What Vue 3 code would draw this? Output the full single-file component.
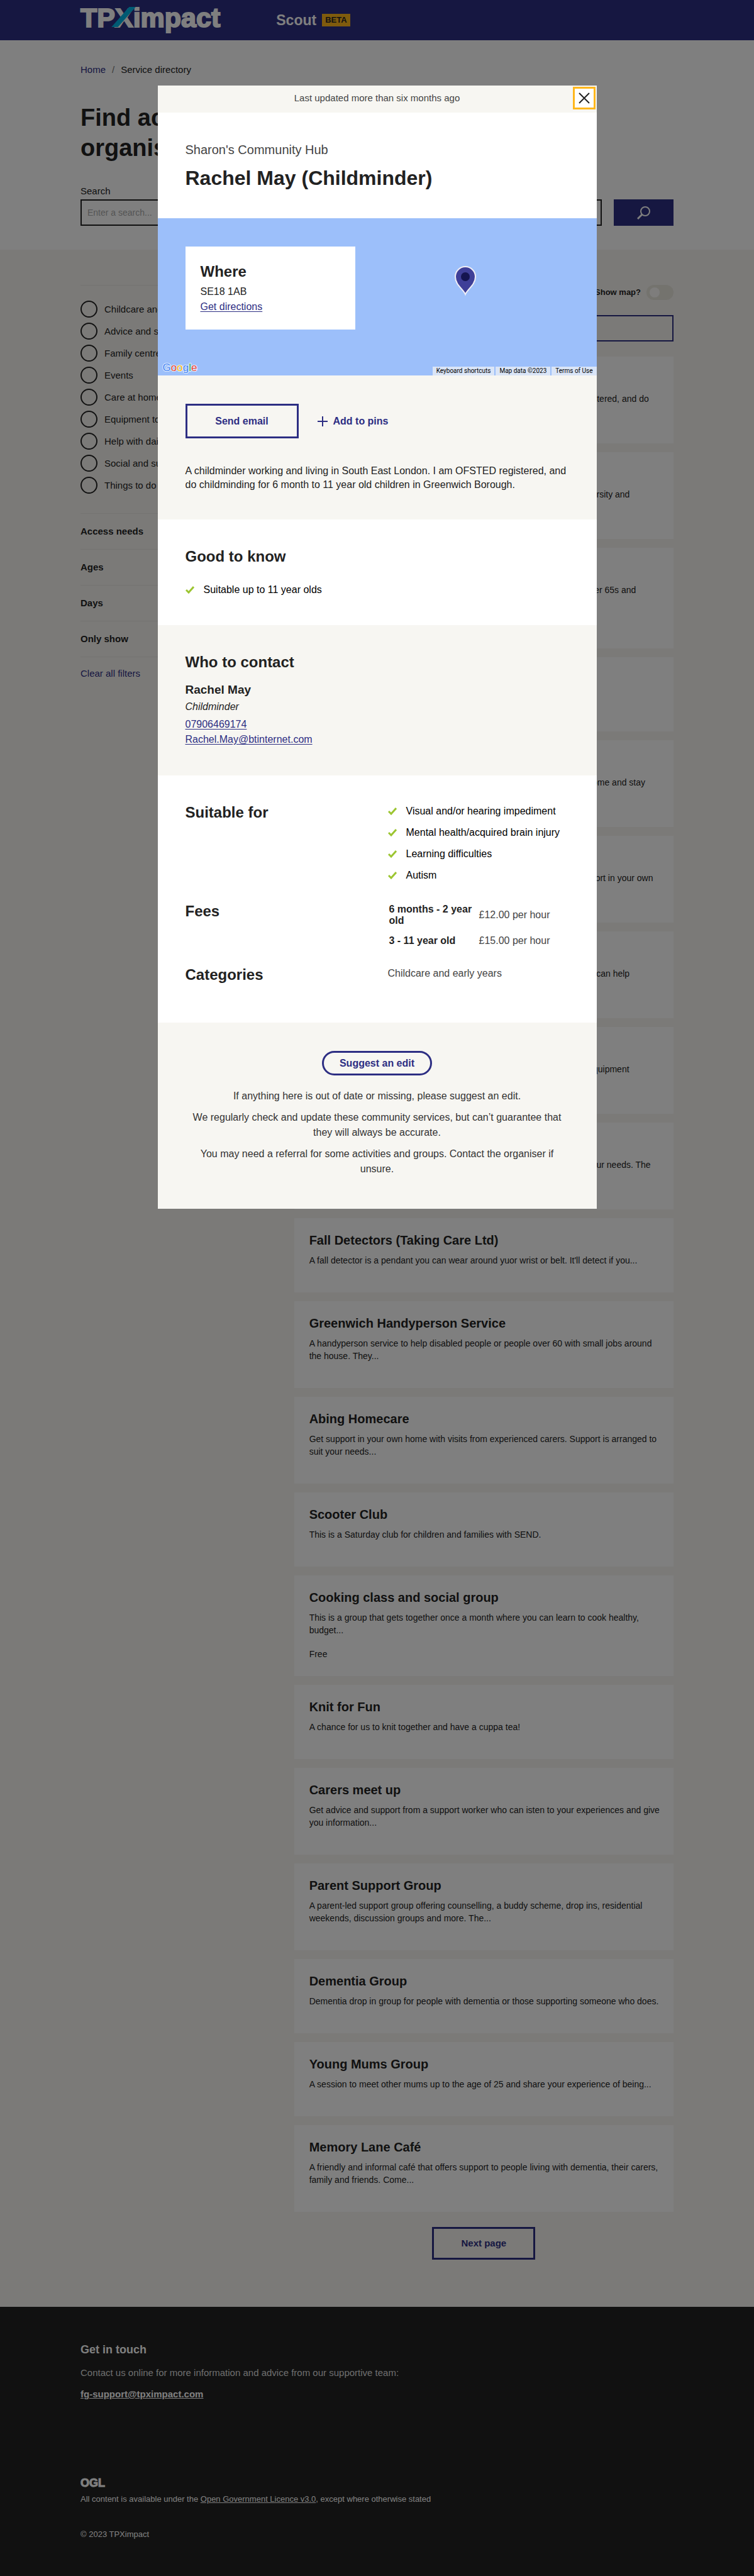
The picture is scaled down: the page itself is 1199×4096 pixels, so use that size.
<script setup>
import { ref } from 'vue'

const categories = [
  'Childcare and early years',
  'Advice and support',
  'Family centres',
  'Events',
  'Care at home',
  'Equipment to help you',
  'Help with daily living',
  'Social and support groups',
  'Things to do'
]

const filterGroups = ['Access needs', 'Ages', 'Days', 'Only show']

const services = [
  { name: 'Rachel May (Childminder)', text: 'Childminder working and living in South East London. I am OFSTED registered, and do\nchildminding for 6 month...' },
  { name: 'Community Choir', text: 'A friendly local group that sings songs together and celebrates all the diversity and\nculture of...' },
  { name: 'Lunch Club', text: 'A weekly lunch club offers good food and company for people who are over 65s and\ntheir carers...', fee: 'Free' },
  { name: 'Art Group', text: 'A relaxed art group for all abilities.' },
  { name: 'Home Support', text: 'We provide care and support so that people can live safely in their own home and stay\nindependent...' },
  { name: 'Care Companions', text: 'Our companions offer a helping hand, warm company and everyday comfort in your own\nhome...' },
  { name: 'Advice Line', text: 'Speak to someone about money, housing and benefits. Our friendly team can help\nyou find...' },
  { name: 'Mobility Hire', text: 'Hire or buy wheelchairs, walking frames, shower seats and other home equipment\nfrom our...' },
  { name: 'Meals at Home', text: 'Hot and frozen meals that are delivered to your home and made to suit your needs. The\nmeals...' },
  { name: 'Fall Detectors (Taking Care Ltd)', text: "A fall detector is a pendant you can wear around yuor wrist or belt. It'll detect if you..." },
  { name: 'Greenwich Handyperson Service', text: 'A handyperson service to help disabled people or people over 60 with small jobs around\nthe house. They...' },
  { name: 'Abing Homecare', text: 'Get support in your own home with visits from experienced carers. Support is arranged to\nsuit your needs...' },
  { name: 'Scooter Club', text: 'This is a Saturday club for children and families with SEND.' },
  { name: 'Cooking class and social group', text: 'This is a group that gets together once a month where you can learn to cook healthy,\nbudget...', fee: 'Free' },
  { name: 'Knit for Fun', text: 'A chance for us to knit together and have a cuppa tea!' },
  { name: 'Carers meet up', text: 'Get advice and support from a support worker who can isten to your experiences and give\nyou information...' },
  { name: 'Parent Support Group', text: 'A parent-led support group offering counselling, a buddy scheme, drop ins, residential\nweekends, discussion groups and more. The...' },
  { name: 'Dementia Group', text: 'Dementia drop in group for people with dementia or those supporting someone who does.' },
  { name: 'Young Mums Group', text: 'A session to meet other mums up to the age of 25 and share your experience of being...' },
  { name: 'Memory Lane Café', text: 'A friendly and informal café that offers support to people living with dementia, their carers,\nfamily and friends. Come...' }
]

const suitableFor = [
  'Visual and/or hearing impediment',
  'Mental health/acquired brain injury',
  'Learning difficulties',
  'Autism'
]

const fees = [
  { age: '6 months - 2 year old', price: '£12.00 per hour' },
  { age: '3 - 11 year old', price: '£15.00 per hour' }
]

const query = ref('')
const category = ref('')
const showMap = ref(false)
const open = ref(true)
</script>

<template>
  <div class="page">
    <header class="site-header">
      <div class="container header-row">
        <a class="logo" href="#">TP<span class="logo-x">X<svg viewBox="0 0 41 34" aria-hidden="true"><path d="M0 34 L30 0 H41 L11 34 Z" fill="#00b4e6" /></svg></span>impact</a>
        <a class="product" href="#">Scout</a>
        <span class="beta">BETA</span>
      </div>
    </header>

    <section class="intro">
      <div class="container">
        <nav class="crumbs" aria-label="Breadcrumb">
          <a href="#">Home</a><span class="slash">/</span><span>Service directory</span>
        </nav>
        <h1>Find activities and<br>organisations</h1>
        <form @submit.prevent>
          <label class="search-label" for="search">Search</label>
          <div class="search-row">
            <input id="search" v-model="query" class="search-input" type="text" placeholder="Enter a search...">
            <button class="search-button" type="submit" aria-label="Search">
              <svg width="22" height="22" viewBox="0 0 22 22" fill="none" stroke="#fff" stroke-width="2">
                <circle cx="13" cy="9" r="7" />
                <path d="M8 14 L1 21" stroke-width="3" />
              </svg>
            </button>
          </div>
        </form>
      </div>
    </section>

    <main class="directory">
      <div class="container columns">
        <aside>
          <fieldset class="categories">
            <label v-for="c in categories" :key="c" class="category">
              <input v-model="category" type="radio" name="category" :value="c">
              <span>{{ c }}</span>
            </label>
          </fieldset>
          <button v-for="g in filterGroups" :key="g" class="filter-group" type="button">{{ g }}</button>
          <a class="clear" href="#">Clear all filters</a>
        </aside>

        <div class="results">
          <label class="map-toggle">Show map?<input v-model="showMap" type="checkbox"></label>
          <button class="pinned" type="button" aria-label="View pinned services"></button>
          <ul class="cards">
            <li v-for="s in services" :key="s.name" class="card">
              <h2>{{ s.name }}</h2>
              <p class="summary">{{ s.text }}</p>
              <p v-if="s.fee" class="fee">{{ s.fee }}</p>
            </li>
          </ul>
          <button class="next" type="button">Next page</button>
        </div>
      </div>
    </main>

    <footer class="site-footer">
      <div class="container">
        <h2>Get in touch</h2>
        <p class="invite">Contact us online for more information and advice from our supportive team:</p>
        <a class="support" href="mailto:fg-support@tpximpact.com">fg-support@tpximpact.com</a>
        <p class="ogl">OGL</p>
        <p class="small">All content is available under the <a href="#">Open Government Licence v3.0</a>, except where otherwise stated</p>
        <p class="small copyright">© 2023 TPXimpact</p>
      </div>
    </footer>

    <div v-if="open" class="backdrop">
      <article class="dialog" role="dialog" aria-modal="true" aria-labelledby="service-name">
        <div class="updated">
          Last updated more than six months ago
          <button class="close" type="button" aria-label="Close" @click="open = false">
            <svg width="18" height="18" viewBox="0 0 18 18" stroke="#222" stroke-width="2"><path d="M1 1 L17 17 M17 1 L1 17" /></svg>
          </button>
        </div>

        <header class="title">
          <p>Sharon's Community Hub</p>
          <h2 id="service-name">Rachel May (Childminder)</h2>
        </header>

        <div class="map">
          <div class="where">
            <h3>Where</h3>
            <p>SE18 1AB</p>
            <a class="link" href="#">Get directions</a>
          </div>
          <svg class="pin" width="36" height="48" viewBox="0 0 36 48" aria-hidden="true">
            <path d="M18 45 C15 37 2 30 2 17 A16 16 0 0 1 34 17 C34 30 21 37 18 45 Z" fill="#3f3f98" stroke="#f0eef5" stroke-width="2" />
            <circle cx="18" cy="17" r="7" fill="#151550" />
          </svg>
          <span class="google" aria-label="Google"><i class="b">G</i><i class="r">o</i><i class="y">o</i><i class="b">g</i><i class="g">l</i><i class="r">e</i></span>
          <div class="map-terms">
            <span>Keyboard shortcuts</span><span>Map data ©2023</span><span>Terms of Use</span>
          </div>
        </div>

        <section class="about tint">
          <div class="actions">
            <button class="outline" type="button">Send email</button>
            <button class="pin-button" type="button">
              <svg width="16" height="16" viewBox="0 0 16 16" stroke="#2d2e83" stroke-width="2"><path d="M8 0 V16 M0 8 H16" /></svg>
              Add to pins
            </button>
          </div>
          <p>A childminder working and living in South East London. I am OFSTED registered, and do childminding for 6 month to 11 year old children in Greenwich Borough.</p>
        </section>

        <section class="good">
          <h3>Good to know</h3>
          <ul class="ticks">
            <li>
              <svg width="14" height="12" viewBox="0 0 14 12" fill="none" stroke="#9cc531" stroke-width="3"><path d="M1 6 L5 10 L13 1" /></svg>
              Suitable up to 11 year olds
            </li>
          </ul>
        </section>

        <section class="contact tint">
          <h3>Who to contact</h3>
          <p class="person">Rachel May</p>
          <p class="role">Childminder</p>
          <a class="link" href="tel:07906469174">07906469174</a>
          <a class="link" href="mailto:Rachel.May@btinternet.com">Rachel.May@btinternet.com</a>
        </section>

        <section class="details">
          <h3>Suitable for</h3>
          <ul class="ticks">
            <li v-for="s in suitableFor" :key="s">
              <svg width="14" height="12" viewBox="0 0 14 12" fill="none" stroke="#9cc531" stroke-width="3"><path d="M1 6 L5 10 L13 1" /></svg>
              {{ s }}
            </li>
          </ul>
          <h3>Fees</h3>
          <table class="fees">
            <tbody>
              <tr v-for="f in fees" :key="f.age">
                <th scope="row">{{ f.age }}</th>
                <td>{{ f.price }}</td>
              </tr>
            </tbody>
          </table>
          <h3>Categories</h3>
          <p>Childcare and early years</p>
        </section>

        <section class="suggest tint">
          <button class="pill" type="button">Suggest an edit</button>
          <p>If anything here is out of date or missing, please suggest an edit.</p>
          <p>We regularly check and update these community services, but can’t guarantee that they will always be accurate.</p>
          <p>You may need a referral for some activities and groups. Contact the organiser if unsure.</p>
        </section>
      </article>
    </div>
  </div>
</template>

<style>
body {
  margin: 0;
}
</style>

<style scoped>
.page {
  position: relative;
  color: #222;
  background: #fff;
  font: 15px/24px "Liberation Sans", Arial, Helvetica, sans-serif;
}
.page * {
  box-sizing: border-box;
}
h1, h2, h3, p, ul, fieldset {
  margin: 0;
  padding: 0;
  border: 0;
}
ul {
  list-style: none;
}
button, input {
  margin: 0;
  font: inherit;
  border-radius: 0;
}
button {
  padding: 0;
  color: #2d2e83;
  font-weight: 700;
  background: none;
  border: 0;
  cursor: pointer;
}
.container {
  width: calc(100% - 32px);
  max-width: 943px;
  margin: 0 auto;
}

.site-header {
  background: #2d2e83;
}
.header-row {
  display: flex;
  align-items: center;
  height: 64px;
}
.logo {
  padding-bottom: 8px;
  color: #fff;
  font-size: 43px;
  line-height: 56px;
  font-weight: 700;
  text-decoration: none;
  -webkit-text-stroke: 2px #fff;
}
.logo-x {
  position: relative;
}
.logo-x svg {
  position: absolute;
  left: -6px;
  bottom: 9px;
  width: 39px;
  height: 32px;
}
.product {
  margin-left: 89px;
  color: #fff;
  font-size: 23px;
  font-weight: 700;
  text-decoration: none;
}
.beta {
  margin-left: 9px;
  padding: 0 5px;
  font-size: 13px;
  line-height: 20px;
  font-weight: 700;
  background: #ffb71b;
}

.intro {
  padding: 35px 0 38px;
}
.crumbs a,
.clear {
  color: #2d2e83;
  text-decoration: none;
}
.slash {
  margin: 0 10px;
  color: #777;
}
h1 {
  margin: 40px 0 35px;
  font-size: 38px;
  line-height: 48px;
}
.search-label {
  display: block;
  margin-bottom: 3px;
  line-height: 20px;
}
.search-row {
  display: flex;
  gap: 19px;
}
.search-input {
  flex: 1;
  min-width: 0;
  height: 42px;
  padding: 0 9px;
  font-size: 14px;
  border: 2px solid #222;
  background: #fff;
}
.search-input::placeholder {
  color: #aaa;
}
.search-button {
  display: flex;
  align-items: center;
  justify-content: center;
  width: 95px;
  background: #2d2e83;
}

.directory {
  padding: 56px 0 75px;
  background: #f7f5f1;
}
.columns {
  display: grid;
  grid-template-columns: minmax(0, 1fr) minmax(0, 2fr);
  gap: 38px;
}
.categories {
  display: flex;
  flex-direction: column;
  gap: 8px;
  padding: 24px 0 31px;
  border-top: 1px solid #e9e7e2;
}
.category {
  display: flex;
  align-items: center;
  gap: 11px;
  height: 27px;
}
.category input {
  appearance: none;
  width: 27px;
  height: 27px;
  border: 2px solid #222;
  border-radius: 50%;
}
.category input:checked {
  box-shadow: inset 0 0 0 5px #fff;
  background: #222;
}
.filter-group {
  display: block;
  width: 100%;
  height: 57px;
  color: #222;
  text-align: left;
  border-top: 1px solid #e9e7e2;
}
.clear {
  display: block;
  padding-top: 16px;
  line-height: 20px;
  border-top: 1px solid #e9e7e2;
}
.results {
  display: flex;
  flex-direction: column;
}
.map-toggle {
  display: flex;
  justify-content: flex-end;
  align-items: center;
  gap: 9px;
  height: 24px;
  font-size: 13px;
  font-weight: 700;
}
.map-toggle input {
  appearance: none;
  display: flex;
  align-items: center;
  width: 43px;
  height: 24px;
  padding: 0 5px;
  border-radius: 12px;
  background: #e8e6dd;
}
.map-toggle input::before {
  content: "";
  width: 16px;
  height: 16px;
  border-radius: 50%;
  background: #fcfbf9;
}
.map-toggle input:checked {
  justify-content: flex-end;
  background: #2d2e83;
}
.pinned {
  height: 42px;
  margin: 24px 0;
  border: 2px solid #2d2e83;
}
.cards {
  display: flex;
  flex-direction: column;
  gap: 14px;
}
.card {
  padding: 23px 12px 24px 24px;
  background: #fff;
}
.card h2 {
  margin-bottom: 10px;
  font-size: 20px;
  line-height: 24px;
}
.summary {
  margin-bottom: 17px;
  font-size: 14px;
  line-height: 20px;
  white-space: pre-line;
}
.fee {
  font-size: 14px;
  line-height: 22px;
}
.next {
  align-self: center;
  width: 164px;
  height: 52px;
  margin-top: 24px;
  border: 3px solid #2d2e83;
}

.site-footer {
  padding: 56px 0;
  color: #fff;
  background: #222;
}
.site-footer a {
  color: #fff;
}
.site-footer h2 {
  font-size: 18px;
  line-height: 24px;
}
.invite {
  margin: 13px 0 10px;
  color: #ddd;
}
.support {
  display: block;
  font-weight: 700;
}
.ogl {
  margin: 117px 0 4px;
  font-size: 18px;
  font-weight: 700;
  -webkit-text-stroke: 1px #fff;
}
.small {
  font-size: 13px;
  line-height: 20px;
}
.copyright {
  margin-top: 36px;
}

.backdrop {
  position: absolute;
  inset: 0;
  padding: 136px 16px;
  background: rgba(0, 0, 0, 0.5);
}
.dialog {
  max-width: 698px;
  margin: 0 auto;
  background: #fff;
  font-size: 16px;
}
.tint {
  background: #f7f6f2;
}
.dialog h3 {
  font-size: 24px;
  line-height: 28px;
}
.updated {
  position: relative;
  height: 43px;
  padding-top: 8px;
  color: #444;
  font-size: 15px;
  text-align: center;
  background: #f7f6f2;
}
.close {
  position: absolute;
  top: 2px;
  right: 2px;
  display: flex;
  align-items: center;
  justify-content: center;
  width: 36px;
  height: 36px;
  background: #fff;
  border: 3px solid #ffb71b;
}
.title {
  padding: 47px 44px 44px;
}
.title p {
  color: #444;
  font-size: 20px;
}
.title h2 {
  margin-top: 13px;
  font-size: 32px;
  line-height: 40px;
}
.map {
  position: relative;
  height: 250px;
  padding: 45px 44px 0;
  background: #9cbffa;
}
.where {
  width: 270px;
  padding: 26px 24px 24px;
  background: #fff;
}
.where p {
  margin-top: 6px;
}
.link {
  display: block;
  width: fit-content;
  color: #2d2e83;
  text-underline-offset: 2px;
}
.pin {
  position: absolute;
  left: 471px;
  top: 76px;
}
.google {
  position: absolute;
  left: 8px;
  bottom: 2px;
  display: flex;
  font-size: 17px;
  line-height: 20px;
}
.google i {
  font-style: normal;
  -webkit-text-stroke: 2px #e6eefc;
  paint-order: stroke fill;
}
.b { color: #4285f4; }
.r { color: #ea4335; }
.y { color: #fbbc05; }
.g { color: #34a853; }
.map-terms {
  position: absolute;
  right: 0;
  bottom: 0;
  display: flex;
  gap: 2px;
  color: #000;
  font: 10px/14px Roboto, sans-serif;
}
.map-terms span {
  padding: 0 6px;
  background: rgba(245, 245, 245, 0.7);
}
.about {
  padding: 45px 44px 44px;
}
.actions {
  display: flex;
  align-items: center;
  gap: 30px;
  margin-bottom: 41px;
}
.outline {
  width: 180px;
  height: 55px;
  border: 3px solid #2d2e83;
}
.pin-button {
  display: flex;
  align-items: center;
  gap: 9px;
}
.about p {
  line-height: 22px;
}
.good {
  padding: 45px 44px 44px;
}
.good h3 {
  margin-bottom: 27px;
}
.ticks {
  display: flex;
  flex-direction: column;
  gap: 10px;
  color: #000;
}
.ticks li {
  display: flex;
  align-items: center;
  gap: 15px;
}
.contact {
  padding: 45px 44px;
}
.person {
  margin: 18px 0 3px;
  font-size: 19px;
  font-weight: 700;
}
.role {
  margin-bottom: 4px;
  font-style: italic;
}
.details {
  display: grid;
  grid-template-columns: minmax(0, 1fr) minmax(0, 1fr);
  gap: 31px 34px;
  padding: 45px 44px 62px;
}
.details p {
  color: #444;
}
.fees {
  border-collapse: collapse;
  line-height: 18px;
  text-align: left;
}
.fees th {
  width: 145px;
  padding: 2px 8px 12px 2px;
}
.fees td {
  padding: 2px 0 12px;
  color: #444;
}
.fees tr:last-child > * {
  padding-bottom: 0;
}
.suggest {
  padding: 45px 44px 51px;
  color: #333;
  text-align: center;
}
.suggest p {
  margin-top: 10px;
}
.pill {
  display: block;
  width: 175px;
  height: 39px;
  margin: 0 auto 21px;
  border: 3px solid #2d2e83;
  border-radius: 20px;
}
</style>
